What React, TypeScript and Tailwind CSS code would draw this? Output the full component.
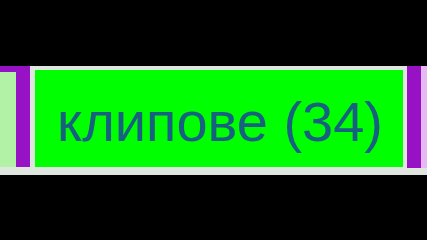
export default function App() {
  return (
    <div className="w-[427px] h-[240px] bg-black flex flex-col overflow-hidden">
      <div className="h-[66px] shrink-0" />
      {/* tab strip */}
      <div className="h-[109px] shrink-0 flex bg-[#dfe6df]">
        <div className="w-[16px] flex flex-col">
          <div className="h-[6px] bg-[#9612c4]" />
          <div className="h-[95px] bg-[#b2f2a6]" />
        </div>
        <div className="w-[14px] h-[101px] bg-[#9612c4]" />
        <div className="w-[5px]" />
        <div className="w-[368px] h-[97px] mt-[4px] bg-[#00ff00] pl-[22px] pt-[24px]">
          <span
            className="text-[56px] leading-none text-[#17607f] whitespace-nowrap"
            style={{ fontFamily: '"Liberation Sans", Arial, sans-serif' }}
          >
            клипове (34)
          </span>
        </div>
        <div className="w-[4px]" />
        <div className="w-[14px] h-[102px] bg-[#9612c4]" />
        <div className="flex-1 h-[102px] bg-[#e6b8f2]" />
      </div>
    </div>
  );
}
